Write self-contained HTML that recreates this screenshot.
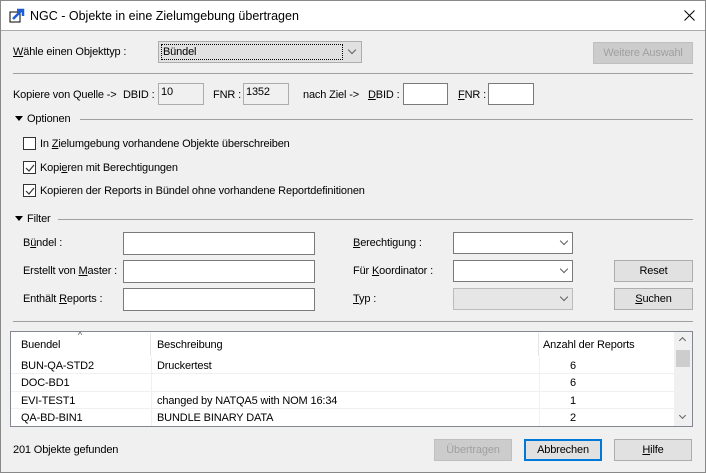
<!DOCTYPE html>
<html><head><meta charset="utf-8"><style>
*{box-sizing:border-box;margin:0;padding:0}
body{width:706px;height:473px;overflow:hidden;background:#f0f0f0;font-family:"Liberation Sans",sans-serif;font-size:11px;letter-spacing:-0.15px;color:#000;position:relative}
.a{position:absolute;white-space:nowrap}
.t{line-height:16px}
.box{position:absolute;background:#fff;border:1px solid #7a7a7a}
.gbox{position:absolute;background:#f0f0f0;border:1px solid #adadad}
.btn{position:absolute;background:#e1e1e1;border:1px solid #adadad;text-align:center;line-height:20px}
.dis{color:#a0a0a0;background:#cccccc;border-color:#bfbfbf}
.line{position:absolute;height:1px;background:#a0a0a0}
.chk{position:absolute;width:13px;height:13px;border:1px solid #333;background:#fff}
.chev{position:absolute;width:6px;height:6px;border-right:1px solid #606060;border-bottom:1px solid #606060;transform:rotate(45deg)}
.tri{position:absolute;width:0;height:0;border-left:4px solid transparent;border-right:4px solid transparent;border-top:5px solid #000}
u{text-decoration:underline}
</style></head><body>
<div class="a" style="left:0;top:0;width:706px;height:473px;border:1px solid #888"></div>
<div class="a" style="left:1px;top:1px;width:704px;height:30px;background:#fff;border-bottom:1px solid #aaa"></div>
<svg class="a" style="left:9px;top:8px" width="16" height="15" viewBox="0 0 16 15"><rect x="1" y="4" width="10" height="10" fill="#fff" stroke="#000"/><path d="M4 11 L13 2 M8 2 H14 V8" stroke="#1e5bd8" stroke-width="2.5" fill="none"/></svg>
<div class="a" style="left:30px;top:8px;font-size:12.5px;line-height:16px;letter-spacing:0">NGC - Objekte in eine Zielumgebung übertragen</div>
<svg class="a" style="left:684px;top:10px" width="11" height="11"><path d="M0.5 0.5 L10.5 10.5 M10.5 0.5 L0.5 10.5" stroke="#000" stroke-width="1"/></svg>

<div class="a t" style="left:13px;top:44px"><u>W</u>ähle einen Objekttyp :</div>
<div class="a" style="left:158px;top:41px;width:204px;height:22px;background:#e1e1e1;border:1px solid #adadad"></div>
<div class="a" style="left:161px;top:44px;width:182px;height:16px;border:1px dotted #000"></div>
<div class="a t" style="left:163px;top:44px">Bündel</div>
<div class="chev" style="left:349px;top:47px"></div>
<div class="btn dis" style="left:593px;top:42px;width:100px;height:22px">Weitere Auswahl</div>
<div class="line" style="left:13px;top:73px;width:680px"></div>

<div class="a t" style="left:13px;top:87px">Kopiere von Quelle -&gt;</div>
<div class="a t" style="left:123px;top:87px">DBID :</div>
<div class="gbox" style="left:158px;top:83px;width:46px;height:22px"></div>
<div class="a t" style="left:161px;top:84px">10</div>
<div class="a t" style="left:213px;top:87px">FNR :</div>
<div class="gbox" style="left:243px;top:83px;width:46px;height:22px"></div>
<div class="a t" style="left:246px;top:84px">1352</div>
<div class="a t" style="left:303px;top:87px">nach Ziel -&gt;</div>
<div class="a t" style="left:368px;top:87px"><u>D</u>BID :</div>
<div class="box" style="left:403px;top:83px;width:45px;height:22px"></div>
<div class="a t" style="left:458px;top:87px"><u>F</u>NR :</div>
<div class="box" style="left:488px;top:83px;width:46px;height:22px"></div>

<div class="tri" style="left:15px;top:116px"></div>
<div class="a t" style="left:27px;top:111px">Optionen</div>
<div class="line" style="left:80px;top:119px;width:613px"></div>
<div class="chk" style="left:23px;top:137px"></div>
<div class="a t" style="left:40px;top:136px">In <u>Z</u>ielumgebung vorhandene Objekte überschreiben</div>
<div class="chk" style="left:23px;top:161px"></div>
<svg class="a" style="left:25px;top:163px" width="10" height="10"><path d="M1 5 L4 8 L9 2" stroke="#333" fill="none" stroke-width="1.2"/></svg>
<div class="a t" style="left:40px;top:160px">Kopi<u>e</u>ren mit Berechtigungen</div>
<div class="chk" style="left:23px;top:184px"></div>
<svg class="a" style="left:25px;top:186px" width="10" height="10"><path d="M1 5 L4 8 L9 2" stroke="#333" fill="none" stroke-width="1.2"/></svg>
<div class="a t" style="left:40px;top:183px">Kopieren der Reports in Bündel ohne vorhandene Reportdefinitionen</div>

<div class="tri" style="left:15px;top:216px"></div>
<div class="a t" style="left:27px;top:211px">Filter</div>
<div class="line" style="left:58px;top:219px;width:635px"></div>

<div class="a t" style="left:23px;top:235px">B<u>ü</u>ndel :</div>
<div class="box" style="left:123px;top:232px;width:192px;height:23px"></div>
<div class="a t" style="left:23px;top:263px">Erstellt von <u>M</u>aster :</div>
<div class="box" style="left:123px;top:260px;width:192px;height:23px"></div>
<div class="a t" style="left:23px;top:291px">Enthält <u>R</u>eports :</div>
<div class="box" style="left:123px;top:288px;width:192px;height:23px"></div>

<div class="a t" style="left:353px;top:235px"><u>B</u>erechtigung :</div>
<div class="box" style="left:453px;top:232px;width:120px;height:22px"></div>
<div class="chev" style="left:561px;top:238px"></div>
<div class="a t" style="left:353px;top:263px">Für <u>K</u>oordinator :</div>
<div class="box" style="left:453px;top:260px;width:120px;height:22px"></div>
<div class="chev" style="left:561px;top:266px"></div>
<div class="a t" style="left:353px;top:291px"><u>T</u>yp :</div>
<div class="a" style="left:453px;top:288px;width:120px;height:22px;background:#e6e6e6;border:1px solid #bcbcbc"></div>
<div class="chev" style="left:561px;top:294px"></div>
<div class="btn" style="left:614px;top:260px;width:79px;height:22px">Reset</div>
<div class="btn" style="left:614px;top:288px;width:79px;height:22px"><u>S</u>uchen</div>

<div class="line" style="left:13px;top:321px;width:680px"></div>

<div class="a" style="left:10px;top:331px;width:683px;height:96px;background:#fff;border:1px solid #828790"></div>
<div class="a" style="left:150px;top:333px;width:1px;height:23px;background:#e5e5e5"></div>
<div class="a" style="left:538px;top:333px;width:1px;height:23px;background:#e5e5e5"></div>
<div class="a" style="left:78px;top:330px;font-size:9px;color:#555">^</div>
<div class="a t" style="left:21px;top:337px">Buendel</div>
<div class="a t" style="left:157px;top:337px">Beschreibung</div>
<div class="a t" style="left:543px;top:337px">Anzahl der Reports</div>
<div class="a" style="left:11px;top:373px;width:663px;height:1px;background:#f0f0f0"></div>
<div class="a" style="left:11px;top:391px;width:663px;height:1px;background:#f0f0f0"></div>
<div class="a" style="left:11px;top:408px;width:663px;height:1px;background:#f0f0f0"></div>
<div class="a" style="left:151px;top:357px;width:1px;height:69px;background:#f0f0f0"></div>
<div class="a" style="left:539px;top:357px;width:1px;height:69px;background:#f0f0f0"></div>
<div class="a t" style="left:21px;top:358px">BUN-QA-STD2</div><div class="a t" style="left:157px;top:358px">Druckertest</div><div class="a t" style="left:570px;top:358px">6</div>
<div class="a t" style="left:21px;top:375px">DOC-BD1</div><div class="a t" style="left:570px;top:375px">6</div>
<div class="a t" style="left:21px;top:393px">EVI-TEST1</div><div class="a t" style="left:157px;top:393px">changed by NATQA5 with NOM 16:34</div><div class="a t" style="left:570px;top:393px">1</div>
<div class="a t" style="left:21px;top:410px">QA-BD-BIN1</div><div class="a t" style="left:157px;top:410px">BUNDLE BINARY DATA</div><div class="a t" style="left:570px;top:410px">2</div>
<div class="a" style="left:674px;top:332px;width:18px;height:94px;background:#f0f0f0"></div>
<div class="a" style="left:676px;top:350px;width:14px;height:17px;background:#cdcdcd"></div>
<div class="a" style="left:680px;top:338px;width:5px;height:5px;border-left:1px solid #606060;border-top:1px solid #606060;transform:rotate(45deg)"></div>
<div class="a" style="left:680px;top:413px;width:5px;height:5px;border-right:1px solid #606060;border-bottom:1px solid #606060;transform:rotate(45deg)"></div>

<div class="a t" style="left:13px;top:442px">201 Objekte gefunden</div>
<div class="btn dis" style="left:434px;top:439px;width:78px;height:22px">Übertragen</div>
<div class="btn" style="left:524px;top:439px;width:78px;height:22px;border:2px solid #0078d7;line-height:18px">Abbrechen</div>
<div class="btn" style="left:614px;top:439px;width:78px;height:22px"><u>H</u>ilfe</div>
</body></html>
